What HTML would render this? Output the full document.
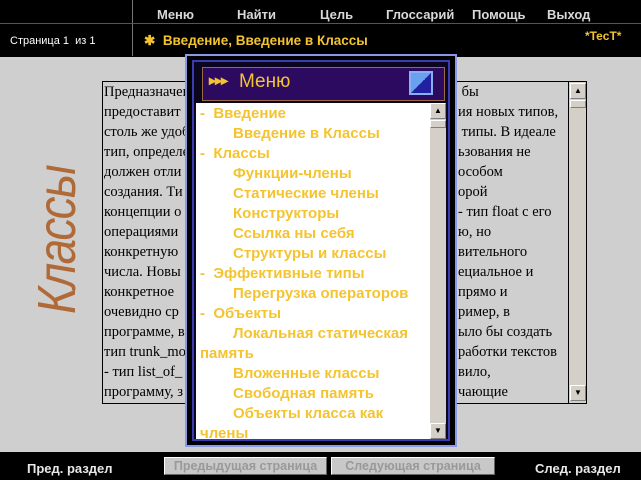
<!DOCTYPE html>
<html><head><meta charset="utf-8"><style>
*{margin:0;padding:0;box-sizing:border-box}
body{width:641px;height:480px;overflow:hidden;background:#000;position:relative;font-family:"Liberation Sans",sans-serif}
.a{position:absolute}
.nav{color:#d8d8d8;font-weight:bold;font-size:13px;top:7px}
.serif{font-family:"Liberation Serif",serif;font-size:14.5px;color:#000;line-height:20px;white-space:nowrap}
.mi{font-weight:bold;color:#f4c430;font-size:15px;line-height:20px;white-space:nowrap}
.mi span{display:inline-block;width:33px}
.sb{background:#d4d0c8}
.btn{border:1px solid;border-color:#fff #808080 #808080 #fff;background:#d4d0c8;width:16px;height:16px;font-size:8px;text-align:center;line-height:14px;color:#000}
</style></head><body>
<div class="a" style="left:132px;top:0;width:1px;height:56px;background:#777"></div>
<div class="a" style="left:0;top:23px;width:641px;height:1px;background:#555"></div>
<div class="a nav" style="left:157px">Меню</div>
<div class="a nav" style="left:237px">Найти</div>
<div class="a nav" style="left:320px">Цель</div>
<div class="a nav" style="left:386px">Глоссарий</div>
<div class="a nav" style="left:472px">Помощь</div>
<div class="a nav" style="left:547px">Выход</div>
<div class="a" style="left:10px;top:35px;color:#fff;font-size:11px">Страница 1&nbsp; из 1</div>
<div class="a" style="left:144px;top:33px;color:#f4c430;font-weight:bold;font-size:13.5px">✱&nbsp; Введение, Введение в Классы</div>
<div class="a" style="left:585px;top:29px;color:#f4c430;font-weight:bold;font-size:12px">*TecT*</div>

<div class="a" style="left:0;top:57px;width:641px;height:395px;background:#cfcfcf"></div>
<div class="a" style="left:57px;top:240px;transform:translate(-50%,-50%) rotate(-90deg) scaleX(0.85);color:#b06a38;font-size:54px;font-family:'Liberation Sans',sans-serif;font-style:italic;transform-origin:center;white-space:nowrap;letter-spacing:-2px">Классы</div>

<div class="a" style="left:102px;top:81px;width:485px;height:323px;border:1px solid #000;background:#cfcfcf;overflow:hidden">
<div class="a serif" style="left:1px;top:0">Предназначение<br>предоставит<br>столь же удобные<br>тип, определе<br>должен отли<br>создания. Ти<br>концепции о<br>операциями<br>конкретную<br>числа. Новы<br>конкретное<br>очевидно ср<br>программе, в<br>тип trunk_mo<br>- тип list_of_<br>программу, з</div>
<div class="a serif" style="left:355px;top:0;padding-left:0">&nbsp;бы<br>ия новых типов,<br>&nbsp;типы. В идеале<br>ьзования не<br>особом<br>орой<br>- тип float с его<br>ю, но<br>вительного<br>ециальное и<br>прямо и<br>ример, в<br>ыло бы создать<br>работки текстов<br>вило,<br>чающие</div>
<div class="a sb" style="left:465px;top:0;width:18px;height:321px;border-left:1px solid #000">
<div class="btn a" style="left:1px;top:1px">▲</div>
<div class="btn a" style="left:1px;top:18px;height:8px"></div>
<div class="btn a" style="left:1px;top:303px">▼</div></div>
</div>

<div class="a" style="left:185px;top:54px;width:272px;height:393px;border:2px solid #8a98e8;background:#000">
<div class="a" style="left:5px;top:4px;width:258px;height:381px;border:2px solid #3c3cb0;background:#0a0620"></div>
<div class="a" style="left:15px;top:11px;width:243px;height:34px;background:#2c0a60;border:1px solid #9a6a40"></div>
<div class="a" style="left:22px;top:16px;color:#f4c430;font-weight:bold;font-size:14px;letter-spacing:-1px">▸▸▸</div>
<div class="a" style="left:52px;top:15px;color:#f4c430;font-size:19px">Меню</div>
<div class="a" style="left:222px;top:15px;width:24px;height:24px;border:2px solid #8ab0f0;background:linear-gradient(135deg,#6aa0f0 50%,#2020a0 50%)"></div>
<div class="a" style="left:9px;top:47px;width:234px;height:336px;background:#fff;overflow:hidden">
<div class="a mi" style="left:4px;top:1px">-&nbsp; Введение<br><span></span>Введение в Классы<br>-&nbsp; Классы<br><span></span>Функции-члены<br><span></span>Статические члены<br><span></span>Конструкторы<br><span></span>Ссылка ны себя<br><span></span>Структуры и классы<br>-&nbsp; Эффективные типы<br><span></span>Перегрузка операторов<br>-&nbsp; Объекты<br><span></span>Локальная статическая<br>память<br><span></span>Вложенные классы<br><span></span>Свободная память<br><span></span>Объекты класса как<br>члены</div>
</div>
<div class="a sb" style="left:243px;top:47px;width:16px;height:336px">
<div class="btn a" style="left:0;top:0">▲</div>
<div class="btn a" style="left:0;top:17px;height:8px"></div>
<div class="btn a" style="left:0;top:320px">▼</div></div>
</div>

<div class="a" style="left:27px;top:461px;color:#e8e8e8;font-weight:bold;font-size:13px">Пред. раздел</div>
<div class="a" style="left:535px;top:461px;color:#e8e8e8;font-weight:bold;font-size:13px">След. раздел</div>
<div class="a" style="left:164px;top:457px;width:163px;height:18px;background:#c8c8c8;border:1px solid;border-color:#fff #666 #666 #fff;color:#999;font-weight:bold;font-size:12.5px;text-align:center;line-height:16px">Предыдущая страница</div>
<div class="a" style="left:331px;top:457px;width:164px;height:18px;background:#c8c8c8;border:1px solid;border-color:#fff #666 #666 #fff;color:#999;font-weight:bold;font-size:12.5px;text-align:center;line-height:16px">Следующая страница</div>
</body></html>
